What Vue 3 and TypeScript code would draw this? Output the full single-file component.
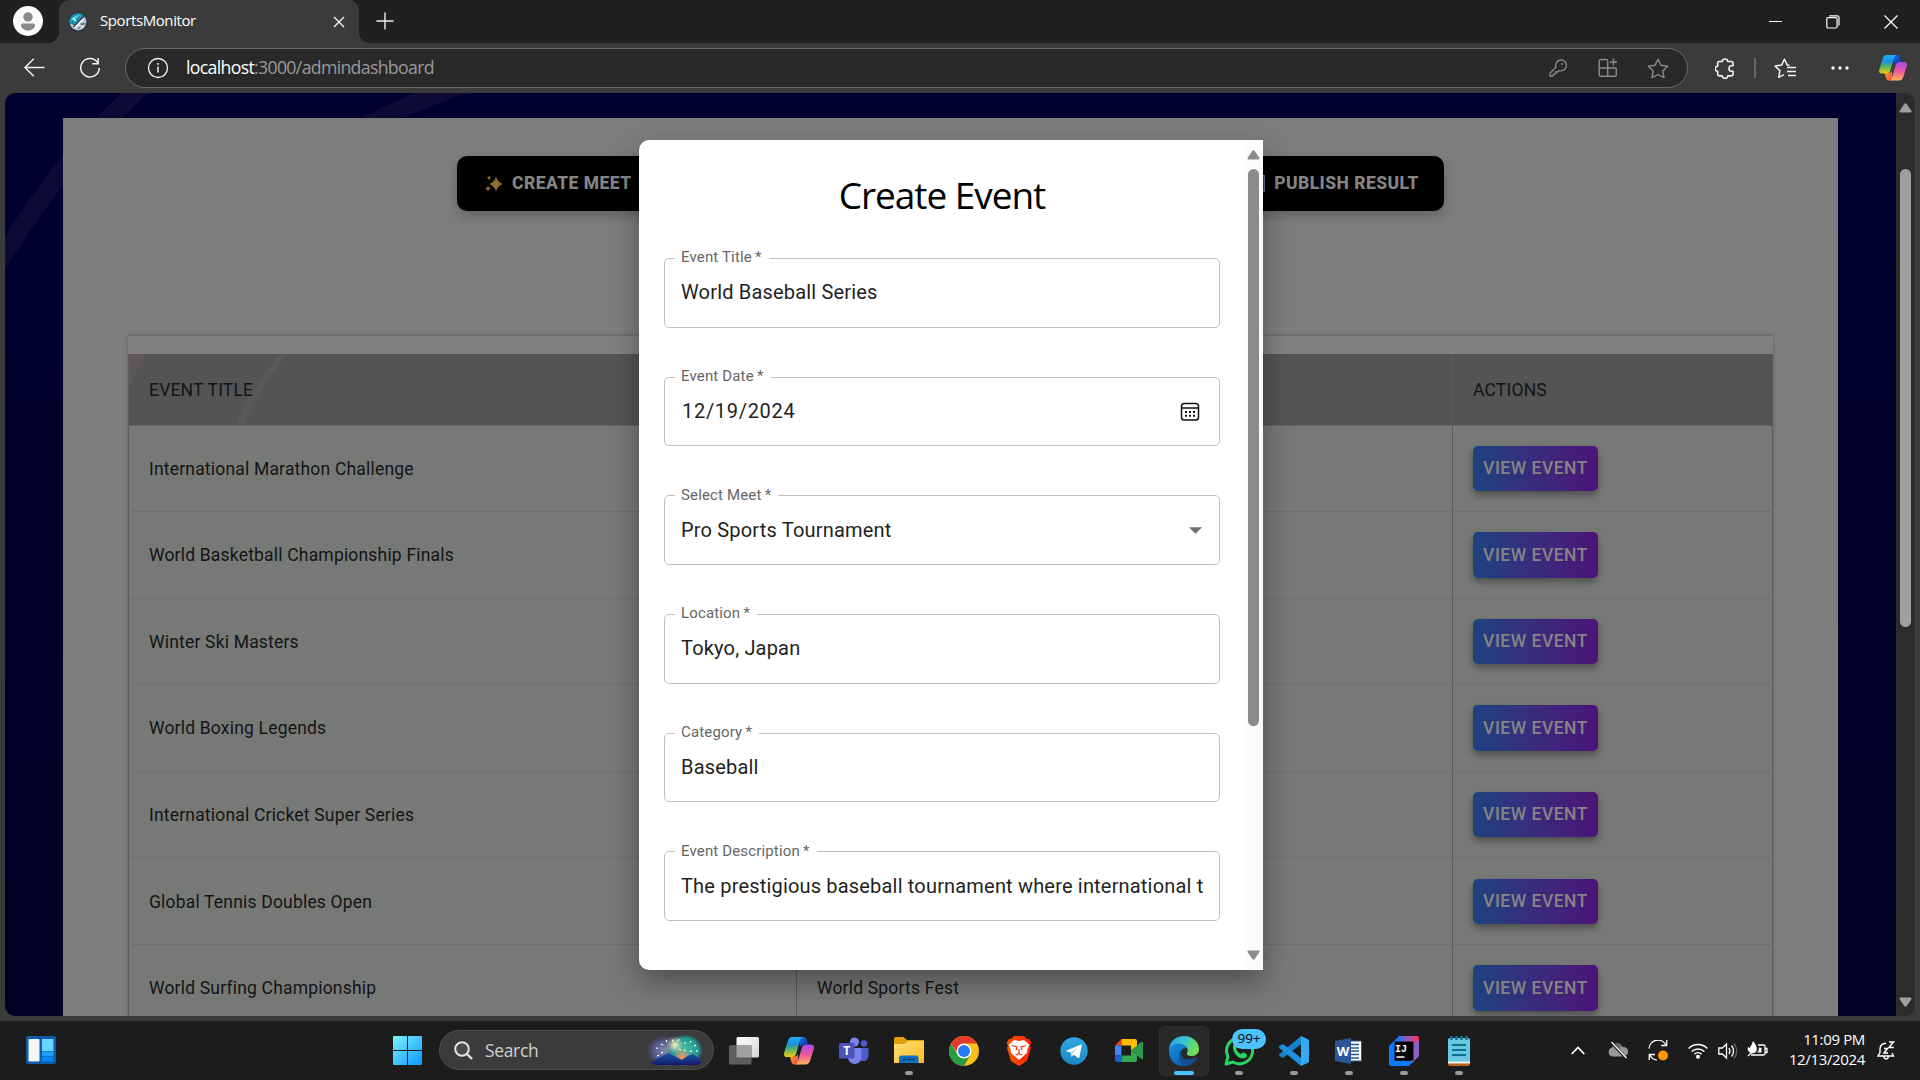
<script setup lang="ts">
interface Field {
  label: string
  value: string
  kind: 'text' | 'date' | 'select'
}
interface EventRow {
  title: string
  meet: string
}

const fields: Field[] = [
  { label: 'Event Title', value: 'World Baseball Series', kind: 'text' },
  { label: 'Event Date', value: '12/19/2024', kind: 'date' },
  { label: 'Select Meet', value: 'Pro Sports Tournament', kind: 'select' },
  { label: 'Location', value: 'Tokyo, Japan', kind: 'text' },
  { label: 'Category', value: 'Baseball', kind: 'text' },
  { label: 'Event Description', value: 'The prestigious baseball tournament where international t', kind: 'text' },
]

const rows: EventRow[] = [
  { title: 'International Marathon Challenge', meet: '' },
  { title: 'World Basketball Championship Finals', meet: '' },
  { title: 'Winter Ski Masters', meet: '' },
  { title: 'World Boxing Legends', meet: '' },
  { title: 'International Cricket Super Series', meet: '' },
  { title: 'Global Tennis Doubles Open', meet: '' },
  { title: 'World Surfing Championship', meet: 'World Sports Fest' },
]
</script>

<template>
  <div class="desktop">
    <svg class="defs" width="0" height="0" aria-hidden="true">
      <defs>
        <linearGradient id="cpA" x1="0" y1="0" x2="0" y2="1">
          <stop offset="0" stop-color="#1fb0f5" /><stop offset=".35" stop-color="#1d8fe0" />
          <stop offset=".65" stop-color="#5fb75a" /><stop offset="1" stop-color="#f8c70e" />
        </linearGradient>
        <linearGradient id="cpB" x1="0" y1="0" x2="0" y2="1">
          <stop offset="0" stop-color="#a24bf0" /><stop offset=".5" stop-color="#f0559a" /><stop offset="1" stop-color="#ffb45c" />
        </linearGradient>
        <linearGradient id="cpC" x1="0" y1="0" x2="1" y2="1">
          <stop offset="0" stop-color="#1b6fe8" /><stop offset="1" stop-color="#0a2fae" />
        </linearGradient>
        <linearGradient id="cpD" x1="0" y1="0" x2="1" y2="1">
          <stop offset="0" stop-color="#f9a13a" /><stop offset="1" stop-color="#f2503a" />
        </linearGradient>
        <symbol id="copilot" viewBox="0 0 30 28">
          <path d="M16 0h3.500c2 0 2.700 1.300 3.200 3l1.300 4.500h-4.500c-2 0-3 1.200-3.500 3z" fill="url(#cpC)" />
          <path d="M14 27.500h-3.500c-2 0-2.700-1.300-3.200-3L6 19.500h4.500c2 0 3-1.200 3.500-3z" fill="url(#cpD)" />
          <path d="M8.500 0h10c-1.300.5-1.900 1.600-2.300 3l-4 13.500c-.6 2-1.700 3.500-4 3.500H3c-2.500 0-3.500-2-2.800-4.500L4 3.500C4.700 1.300 6.200 0 8.500 0z" fill="url(#cpA)" />
          <path d="M21.500 27.500h-10c1.300-.5 1.900-1.600 2.300-3l4-13.500c.6-2 1.700-3.500 4-3.500H27c2.500 0 3.500 2 2.800 4.500L26 24c-.7 2.200-2.200 3.500-4.500 3.500z" fill="url(#cpB)" />
        </symbol>
      </defs>
    </svg>

    <header class="tabs">
      <svg class="avatar" width="30" height="30" viewBox="0 0 30 30">
        <circle cx="15" cy="15" r="15" fill="#fafafa" />
        <circle cx="15" cy="11" r="4.700" fill="#8a8a8a" />
        <path d="M8 19q0-1.500 1.500-1.500h11q1.500 0 1.500 1.500c0 3-3 5.500-7 5.500s-7-2.500-7-5.500z" fill="#8a8a8a" />
      </svg>
      <div class="tab">
        <svg width="20" height="20" viewBox="0 0 20 20">
          <circle cx="10" cy="10" r="9.500" fill="#1c2b38" />
          <circle cx="10" cy="10" r="8.500" fill="#b9c5ce" />
          <path d="M1.500 9A8.500 8.500 0 0 1 15.500 3.500L6.500 13 2 12z" fill="#1698b8" />
          <path d="M3 7.500q4-4.500 9-4.500L6 8z" fill="#6fd6e6" />
          <path d="M16 4L5.500 15" stroke="#1c2b38" stroke-width="1.300" fill="none" />
          <path d="M3 11l5 2.500M9 8l3 1.500M10 17l6-6M12 12h6" stroke="#4a5f6e" stroke-width="1" fill="none" />
          <path d="M5 6l3 3M11 13l4 2M7 15.500L15 7" stroke="#fff" stroke-width="1.200" />
        </svg>
        <span class="tab-title">SportsMonitor</span>
        <svg width="12" height="12" viewBox="0 0 12 12" stroke="#f2f2f2" stroke-width="1.400"><path d="M1 1l10 10M11 1L1 11" /></svg>
      </div>
      <svg class="plus" width="18" height="18" viewBox="0 0 18 18" stroke="#eee" stroke-width="1.400"><path d="M9 .5v17M.5 9h17" /></svg>
      <div class="win">
        <svg width="13" height="13" viewBox="0 0 13 13" stroke="#fff"><path d="M0 6.500h13" /></svg>
        <svg width="14" height="14" viewBox="0 0 14 14" fill="none" stroke="#fff" stroke-width="1.200"><rect x=".8" y="2.700" width="10.300" height="10.300" rx="1.500" /><path d="M3.300.8h8q1.700 0 1.700 1.700v8" /></svg>
        <svg width="14" height="14" viewBox="0 0 14 14" stroke="#fff" stroke-width="1.200"><path d="M.5.500l13 13M13.500.500l-13 13" /></svg>
      </div>
    </header>

    <div class="toolbar">
      <svg class="back" width="21" height="19" viewBox="0 0 21 19" fill="none" stroke="#f2f2f2" stroke-width="1.500"><path d="M9.800.8L1 9.500l8.800 8.700M1 9.500h19.500" /></svg>
      <svg class="reload" width="22" height="22" viewBox="0 0 22 22" fill="none" stroke="#f2f2f2" stroke-width="1.500"><path d="M18.700 5.500A9.300 9.300 0 1 0 20.300 11M19.200 1v5.700h-6" /></svg>
      <div class="address">
        <svg width="22" height="22" viewBox="0 0 22 22" fill="none" stroke="#f2f2f2" stroke-width="1.300"><circle cx="11" cy="11" r="9.500" /><path d="M11 9.500v6M11 6v1.700" stroke-width="1.500" /></svg>
        <span class="url"><b>localhost</b>:3000/admindashboard</span>
        <svg class="key" width="18" height="18" viewBox="0 0 18 18" fill="none" stroke="#8b8b8b" stroke-width="1.300"><path d="M11.300 1a5.400 5.400 0 1 1-1 10.500L8.500 13H6.700v1.800H5L3.700 17H1v-2.800l6-6A5.400 5.400 0 0 1 11.300 1z" /><circle cx="13" cy="5" r=".9" fill="#8b8b8b" stroke="none" /></svg>
        <svg class="apps" width="20" height="20" viewBox="0 0 20 20" fill="none" stroke="#8b8b8b" stroke-width="1.400"><path d="M9.700 18.300V3q0-1.500-1.500-1.500H2.700Q1.200 1.500 1.200 3v13.800q0 1.500 1.500 1.500h14.100q1.500 0 1.500-1.500v-5.300q0-1.500-1.500-1.500H1.200M15.500.5v7M12 4h7" /></svg>
        <svg width="22" height="21" viewBox="0 0 22 21" fill="none" stroke="#8b8b8b" stroke-width="1.400" stroke-linejoin="round"><path d="M11 1.200l3 6.100 6.700 1-4.900 4.700 1.200 6.700-6-3.200-6 3.200 1.200-6.700L1.300 8.300l6.700-1z" /></svg>
      </div>
      <svg class="ext" width="20" height="21" viewBox="0 0 20 21" fill="none" stroke="#f2f2f2" stroke-width="1.600" stroke-linejoin="round"><path d="M4.300 3.500h3a2.700 2.500 0 0 1 5.400 0h3.700q1.600 0 1.600 1.600v2.700h-1.500a2.500 2.700 0 1 0 0 5.400H18v3.100q0 1.600-1.600 1.600h-3.700a2.700 2.500 0 0 1-5.400 0h-3q-1.600 0-1.600-1.600v-3a2.500 2.500 0 0 1 0-5v-3.200q0-1.600 1.600-1.600z" /></svg>
      <i class="sep"></i>
      <svg class="fav" width="22" height="21" viewBox="0 0 22 21" fill="none" stroke="#f2f2f2" stroke-width="1.500" stroke-linejoin="round"><path d="M15.500 7.500l-2.200-.4L10.500 1.200 7.700 7 1.200 8.100l4.700 4.500-1.200 6.700 5.200-2.700M13 9.500h9M13 13.500h9M14 17.500h8" /></svg>
      <svg class="dots" width="18" height="4" viewBox="0 0 18 4" fill="#fff"><circle cx="2" cy="2" r="1.700" /><circle cx="9" cy="2" r="1.700" /><circle cx="16" cy="2" r="1.700" /></svg>
      <svg class="cp" width="28" height="26"><use href="#copilot" /></svg>
    </div>

    <div class="frame">
      <main class="page">
        <svg class="arcs" width="1891" height="923" viewBox="5 93 1891 923" fill="#0d0a36">
          <path d="M122 93Q55 155 5 237v33Q65 170 148 93z" />
          <path d="M415 93Q388 104 362 118h43q30-15 63-25z" />
        </svg>
        <section class="panel">
          <div class="actions">
            <button class="act">
              <svg width="18" height="18" viewBox="0 0 18 18" fill="#90702c"><path d="M11 1.500q1.500 5.500 6.700 7.500-5.200 2-6.700 7.500Q9.500 11 4.500 9q5-2 6.500-7.500zM4 .3q.4 2 2.200 2.500Q4.400 3.300 4 5.300 3.600 3.300 1.800 2.800 3.600 2.300 4 .3zM3 10.500q.4 2.300 2.800 3Q3.400 14.200 3 16.500q-.4-2.300-2.800-3 2.400-.7 2.800-3z" /></svg>
              CREATE MEET
            </button>
            <button class="act right">
              <i class="doc"></i>PUBLISH RESULT
            </button>
          </div>
          <div class="table">
            <div class="row head">
              <svg class="streaks" width="200" height="71" viewBox="0 0 200 71" fill="#5d5858"><path d="M0 0h18Q9 16 0 36zM152 0h8Q132 32 116 71h-8Q124 32 152 0z" /></svg>
              <div class="cell c1">EVENT TITLE</div>
              <div class="cell c2"></div>
              <div class="cell c4">ACTIONS</div>
            </div>
            <div v-for="r in rows" :key="r.title" class="row">
              <div class="cell c1">{{ r.title }}</div>
              <div class="cell c2">{{ r.meet }}</div>
              <div class="cell c4"><button class="view">VIEW EVENT</button></div>
            </div>
          </div>
        </section>
      </main>
      <div class="page-scroll">
        <svg width="13" height="10" viewBox="0 0 13 10"><path d="M5.300 1q1.200-1.600 2.400 0l4.600 6.800q.8 1.700-.9 1.700H1.600Q-.1 9.500.7 7.800z" fill="#a0a0a0" /></svg>
        <i></i>
        <svg class="down" width="13" height="10" viewBox="0 0 13 10"><path d="M5.300 9q1.200 1.600 2.400 0l4.600-6.800q.8-1.700-.9-1.700H1.600Q-.1.500.7 2.200z" fill="#a0a0a0" /></svg>
      </div>
    </div>

    <div class="modal">
      <div class="form">
        <h2>Create Event</h2>
        <div v-for="f in fields" :key="f.label" class="field">
          <label>{{ f.label }}<span>&thinsp;*</span></label>
          <span class="value" :class="f.kind">{{ f.value }}</span>
          <svg v-if="f.kind === 'date'" class="cal" width="20" height="20" viewBox="0 0 20 20" fill="none" stroke="#111" stroke-width="1.500"><rect x="1.500" y="1.500" width="17" height="16.500" rx="2.800" /><path d="M1.500 6h17" /><path d="M5 10h2M9 10h2M13 10h2M5 13.800h2M9 13.800h2M13 13.800h2" stroke-width="2" /></svg>
          <svg v-if="f.kind === 'select'" class="caret" width="13" height="7" viewBox="0 0 13 7"><path d="M0 .3h13L6.500 6.700z" fill="#707070" /></svg>
        </div>
      </div>
      <div class="modal-scroll">
        <svg width="13" height="10" viewBox="0 0 13 10"><path d="M5.300 1q1.200-1.600 2.400 0l4.600 6.800q.8 1.700-.9 1.700H1.600Q-.1 9.500.7 7.800z" fill="#8b8b8b" /></svg>
        <i></i>
        <svg class="down" width="13" height="10" viewBox="0 0 13 10"><path d="M5.300 9q1.200 1.600 2.400 0l4.600-6.800q.8-1.700-.9-1.700H1.600Q-.1.500.7 2.200z" fill="#8b8b8b" /></svg>
      </div>
    </div>

    <footer class="taskbar">
      <svg class="widgets" width="30" height="28" viewBox="0 0 30 28">
        <rect width="30" height="28" rx="2" fill="#0b5cab" />
        <rect x="2.500" y="3" width="11" height="22.500" rx="1" fill="#f6f6f6" />
        <rect x="16" y="3" width="11.500" height="12" fill="#67d6ff" /><rect x="16" y="15.500" width="11.500" height="4.500" fill="#1ea2ff" /><rect x="16" y="20.500" width="11.500" height="5" fill="#0a84ef" />
      </svg>
      <svg class="start" width="29" height="29" viewBox="0 0 29 29">
        <defs><linearGradient id="win" gradientUnits="userSpaceOnUse" x1="0" y1="0" x2="29" y2="29"><stop offset="0" stop-color="#7ff4ff" /><stop offset="1" stop-color="#0a96ff" /></linearGradient></defs>
        <path d="M1 0h13v14H0V1q0-1 1-1zM15 0h13q1 0 1 1v13H15zM0 15h14v14H1q-1 0-1-1zM15 15h14v13q0 1-1 1H15z" fill="url(#win)" />
      </svg>
      <div class="search">
        <svg width="19" height="19" viewBox="0 0 19 19" fill="none" stroke="#e4e4e4" stroke-width="2"><circle cx="8" cy="8" r="6.800" fill="#4a4a4a" /><path d="M13 13l5 5" stroke-width="2.400" /></svg>
        <span>Search</span>
        <svg class="fireworks" width="58" height="32" viewBox="0 0 58 32">
          <defs>
            <radialGradient id="fwA"><stop offset="0" stop-color="#8a88a8" /><stop offset=".6" stop-color="#585c90" /><stop offset="1" stop-color="#4a4c80" stop-opacity="0" /></radialGradient>
            <radialGradient id="fwB"><stop offset="0" stop-color="#45bfa0" /><stop offset=".75" stop-color="#23988f" /><stop offset="1" stop-color="#208080" stop-opacity="0" /></radialGradient>
            <radialGradient id="fwD"><stop offset="0" stop-color="#ff9060" /><stop offset="1" stop-color="#ff9060" stop-opacity="0" /></radialGradient>
            <radialGradient id="fwE"><stop offset="0" stop-color="#fff0c0" /><stop offset="1" stop-color="#d8d0a0" stop-opacity="0" /></radialGradient>
            <linearGradient id="fwC" x1="0" y1="0" x2="0" y2="1"><stop offset="0" stop-color="#1a58a8" /><stop offset="1" stop-color="#15196c" /></linearGradient>
          </defs>
          <ellipse cx="20" cy="17" rx="20" ry="16" fill="url(#fwA)" /><ellipse cx="39" cy="16" rx="18" ry="16" fill="url(#fwB)" />
          <circle cx="29" cy="11" r="9" fill="url(#fwE)" /><circle cx="36" cy="23" r="9" fill="url(#fwD)" />
          <path d="M5 29q8-6 17-10 7 3 14 7 6-5 11-6 5 3 9 8-2 3-7 3H11q-4 0-6-2z" fill="url(#fwC)" />
          <g stroke="#fff" stroke-width="1.200"><path d="M10 14l2 .4M15 10l2 1M20 6l1 2M27 5.500l-.5 2M15 19l2-.6M11 22l2-.7M33 5l-1 2M39 8v2M45 7l-1 1.600M50 11l-2 1M52 17l-2-.2M46 17.500l-2-.3M33 15l2 1M38 17l1-1" /></g>
        </svg>
      </div>
      <div class="apps-row">
        <div class="slot">
          <svg width="30" height="28" viewBox="0 0 30 28"><defs><linearGradient id="tv" x1="0" y1="0" x2="1" y2="1"><stop offset="0" stop-color="#fff" /><stop offset="1" stop-color="#d5d5d5" /></linearGradient></defs><rect x="7.500" width="22.500" height="20.500" rx="1.500" fill="url(#tv)" /><rect y="8" width="22.500" height="19.500" rx="1.500" fill="#5d5d5d" /><path d="M7.500 8h15v12.500h-15z" fill="#a2a2a2" /></svg>
        </div>
        <div class="slot"><svg width="30" height="28"><use href="#copilot" /></svg></div>
        <div class="slot">
          <svg width="30" height="28" viewBox="0 0 30 28"><circle cx="25" cy="6.500" r="3.300" fill="#5059c9" /><path d="M20 11h9.500v7c0 4-2 6-5 6s-5-2-5-6z" fill="#5059c9" /><circle cx="15.500" cy="5" r="4.500" fill="#7b83eb" /><path d="M9 11h13.500v9c0 4-3 7-6.800 7S9 24 9 20z" fill="#7b83eb" /><rect y="6" width="15.500" height="15.500" rx="1.500" fill="#4b53bc" /><text x="7.700" y="18" text-anchor="middle" class="glyph" font-size="12">T</text></svg>
        </div>
        <div class="slot">
          <svg width="30" height="27" viewBox="0 0 30 27"><defs><linearGradient id="fo" x1="0" y1="0" x2="1" y2="1"><stop offset="0" stop-color="#ffe07a" /><stop offset="1" stop-color="#fdbb1c" /></linearGradient></defs><path d="M0 1.500Q0 0 1.500 0h8l3.500 3H30v8H0z" fill="#e19c0a" /><path d="M0 7h10l4-3h16v22H0z" fill="url(#fo)" /><path d="M5 26v-5q0-2.500 2.500-2.500h14.500q2.500 0 2.500 2.500v5z" fill="#0d70c4" /><path d="M9 22.500h12" stroke="#0a3f78" stroke-width="1.500" /></svg>
          <i class="run"></i>
        </div>
        <div class="slot">
          <svg width="30" height="30" viewBox="0 0 30 30"><circle cx="15" cy="15" r="15" fill="#fbc116" /><path d="M2 7.500A15 15 0 0 1 28 7.500H15L9 18z" fill="#e33b2e" /><path d="M2 7.500a15 15 0 0 0 13 22.500l6.500-11.200H8.500z" fill="#2a9a47" /><circle cx="15" cy="15" r="7.500" fill="#fff" /><circle cx="15" cy="15" r="6" fill="#2979f2" /></svg>
        </div>
        <div class="slot">
          <svg width="26" height="30" viewBox="0 0 26 30"><defs><linearGradient id="br"><stop offset="0" stop-color="#ff5500" /><stop offset="1" stop-color="#ff2000" /></linearGradient></defs><path d="M8 0h10l3 3h2l2.500 4L24 10l1 2-4 13-8 5-8-5L1 12l1-2L.5 7 3 3h2z" fill="url(#br)" /><path d="M8 4l5 1 5-1 5.500 5-2 4-.5 4-4 3.500-4 3.500-4-3.500L5 17l-.5-4-2-4z" fill="#fff" /><path d="M6 9.500l5 1.500-.8 3M20 9.500L15 11l.8 3M13 13v4.500M9.500 19l3.500-1.500 3.500 1.500" stroke="#fb3a08" stroke-width="1.300" fill="none" /></svg>
        </div>
        <div class="slot">
          <svg width="28" height="28" viewBox="0 0 28 28"><defs><linearGradient id="tg" x1="0" y1="0" x2="0" y2="1"><stop offset="0" stop-color="#2fa8e0" /><stop offset="1" stop-color="#1b88c4" /></linearGradient></defs><circle cx="14" cy="14" r="13.700" fill="url(#tg)" /><path d="M5.500 14L21 7.500q1-.2.700 1L19.500 20q-.4 1.500-1.700.7l-4-3-2.300 2.200-.8-4.500z" fill="#fff" /><path d="M10.700 15.400l7.500-5-5.500 6-.6 3.500z" fill="#b8d5e8" /></svg>
        </div>
        <div class="slot">
          <svg width="28" height="23" viewBox="0 0 28 23"><path d="M0 6.500L6.500 0v6.500z" fill="#ea4335" /><path d="M0 6.500h6.500v10H0z" fill="#3f83f4" /><path d="M0 16.500h6.500V23H2q-2 0-2-2z" fill="#1b62d0" /><path d="M6.500 0H20q2 0 2 2v5.500l-6 4v-5H6.500z" fill="#fbbc04" /><path d="M6.500 16.500H16v-5l6 4V21q0 2-2 2H6.500z" fill="#34a853" /><path d="M16 11.500L26 3.300q2-1.300 2 .7v15q0 2-2 .7z" fill="#2c9a48" /></svg>
        </div>
        <div class="slot active">
          <svg width="30" height="30" viewBox="0 0 30 30"><defs><linearGradient id="ed" x1="0" y1="0" x2="1" y2=".35"><stop offset="0" stop-color="#2a9fe2" /><stop offset=".5" stop-color="#34c4d8" /><stop offset="1" stop-color="#72dd55" /></linearGradient><linearGradient id="ee" x1="0" y1="0" x2=".6" y2="1"><stop offset="0" stop-color="#1590dc" /><stop offset="1" stop-color="#1160b5" /></linearGradient></defs><path d="M0 14C0 6 6.500 0 15 0s15 6 15 13c0 4-3 7-7 7-3.500 0-6-1-5-3 2-3 0-7-5-7.500C7 9 1 11 0 14z" fill="url(#ed)" /><path d="M0 15c0-4 4-7.500 9-7.500 4.500 0 8.500 2 9.500 5-2-1-5 0-6 2-2 5 2 11 9 13-2 2-5 2.500-7 2.500C6.500 30 0 24 0 15z" fill="url(#ee)" /><path d="M12.500 14c-2 5 1.500 10 7.500 9.500 3 0 5.500-1.500 7.500-2 .5.300.5 1 0 1.500-3 4.500-7 7-13 7C10 28 8 17 12.500 14z" fill="#124f92" /></svg>
          <i class="run"></i>
        </div>
        <div class="slot">
          <svg width="30" height="30" viewBox="0 0 30 30"><path d="M2 28l2-7.300A13 13 0 1 1 9 26z" fill="none" stroke="#25d366" stroke-width="3" stroke-linejoin="round" /><path d="M9 9l2-2 2.500 4-1.500 2q2 4 5 5.200l2-2 4 2.300q0 4-4 4C13.500 22.500 8 16 9 9z" fill="#25d366" /></svg>
          <span class="badge">99+</span><i class="run"></i>
        </div>
        <div class="slot">
          <svg width="30" height="30" viewBox="0 0 30 30"><path d="M22 0l7 3.300q1 .5 1 1.700v20q0 1.200-1 1.700L22 30z" fill="#35a9f2" /><path d="M22 0v8.300L4 22 .5 20q-1-1 0-2z" fill="#1481cc" /><path d="M22 30v-8.300L4 8 .5 10q-1 1 0 2z" fill="#1c8fdd" /></svg>
          <i class="run"></i>
        </div>
        <div class="slot">
          <svg width="28" height="26" viewBox="0 0 28 26"><path d="M15 3h11.500v20H15z" fill="#fff" stroke="#2b5797" /><path d="M15 6.500h9M15 10h9M15 13h9M15 16.500h9M15 20h9" stroke="#2b5797" stroke-width="1.500" /><path d="M0 3l16-3v26L0 23z" fill="#2b579a" /><text x="8" y="18" text-anchor="middle" class="glyph" font-size="13">W</text></svg>
          <i class="run"></i>
        </div>
        <div class="slot">
          <svg width="30" height="30" viewBox="0 0 30 30"><defs><linearGradient id="ij" x1="0" y1="0" x2="1" y2="0"><stop offset="0" stop-color="#2b6df5" /><stop offset=".5" stop-color="#a055b8" /><stop offset="1" stop-color="#ff3158" /></linearGradient></defs><path d="M10 0h18q2 0 2 2v18l-8 6V8L8 6z" fill="url(#ij)" /><path d="M0 10L10 0v7h-4v18h18l-4 5H2q-2 0-2-2z" fill="#0b7cff" /><path d="M24 8l6-4v16l-8 8z" fill="#8d62c4" /><path d="M5.500 5.500h19v19h-19z" fill="#050505" /><path d="M7.500 21h8" stroke="#fff" stroke-width="1.500" /><text x="12" y="15.500" text-anchor="middle" class="glyph mono" font-size="10">IJ</text></svg>
          <i class="run"></i>
        </div>
        <div class="slot">
          <svg width="22" height="30" viewBox="0 0 22 30"><path d="M0 25h22v3q0 2-2 2H2q-2 0-2-2z" fill="#b5651d" /><path d="M0 4q0-2 2-2h18q2 0 2 2v22H0z" fill="#67c8e0" /><path d="M0 25.500h22v2H0z" fill="#f0f0f0" /><path d="M4 9h14M4 14h14M4 19h14" stroke="#0f6d92" stroke-width="1.800" /><path d="M3.500 0v4M8.500 0v4M13.500 0v4M18.500 0v4" stroke="#176f8c" stroke-width="2.500" /></svg>
          <i class="run"></i>
        </div>
      </div>
      <div class="tray">
        <svg width="14" height="9" viewBox="0 0 14 9" fill="none" stroke="#fff" stroke-width="1.700"><path d="M.7 8L7 1.500 13.300 8" /></svg>
        <svg class="cloud" width="20" height="17" viewBox="0 0 20 17"><path d="M4.500 14.500a4.500 4.500 0 0 1-.5-8.800A5.500 5.500 0 0 1 14.500 5 4.800 4.800 0 0 1 16 14.500z" fill="#9a9a9a" /><path d="M7 2a5.500 5.500 0 0 1 7.500 3q-4 0-5 4z" fill="#6c6c6c" /><path d="M3 0l15 16" stroke="#1c1c1c" stroke-width="3" /><path d="M3.500 0l15 16" stroke="#fff" stroke-width="1.300" /></svg>
        <svg class="sync" width="20" height="21" viewBox="0 0 20 21" fill="none" stroke="#fff" stroke-width="1.300"><path d="M1 8.500A9 9 0 0 1 18 5M18.700 0v5.500h-5.500M1.300 20v-5.500H7M1.800 15q2.500 4.500 7 5" /><circle cx="15" cy="15.500" r="5" fill="#ff9800" stroke="none" /></svg>
        <svg class="wifi" width="20" height="16" viewBox="0 0 20 16" fill="none" stroke="#fff" stroke-width="1.500"><path d="M.7 5.500a13 13 0 0 1 18.600 0M3.700 8.500a9 9 0 0 1 12.600 0M6.500 11.200a5 5 0 0 1 7 0" /><circle cx="10" cy="13.700" r="2" fill="#fff" stroke="none" /></svg>
        <svg class="vol" width="20" height="18" viewBox="0 0 20 18" fill="none" stroke="#fff" stroke-width="1.300"><path d="M.8 6h3.500L8.500 2v14L4.300 12H.8zM11 6q1.800 3 0 6M13.500 3.500q4 5.500 0 11" /><path d="M16 1.500q5.500 7.500 0 15" stroke="#666" /></svg>
        <svg class="bat" width="21" height="17" viewBox="0 0 21 17" fill="none" stroke="#fff" stroke-width="1.300"><path d="M11 4h5.500Q18 4 18 5.500v7q0 1.500-1.500 1.500H4M18.500 7.500H20v4h-1.500" /><path d="M6 0q5 6 3.500 10Q8 13 4 12-.5 10 1 6l1.500 1Q5 4 6 0z" fill="#fff" stroke="none" /><path d="M12 6.500q2 0 2.500.5v4.500H10q2-1.500 2-5z" fill="#fff" stroke="none" /><path d="M1 15l4-4" /></svg>
        <div class="clock"><span>11:09 PM</span><span>12/13/2024</span></div>
        <svg class="bell" width="18" height="19" viewBox="0 0 18 19" fill="none" stroke="#fff" stroke-width="1.400"><path d="M9 2.300Q3.200 2.500 3 8v3.500L1 15h15.500L15 12M6.500 15.500q1 2.500 2.700 2.500t2.500-2.500" /><path d="M12 1h4.500L12 6.500h4.700M7 7.500h3.500L7 12h4" stroke-width="1.500" /></svg>
      </div>
    </footer>
  </div>
</template>

<style>
body {
  background: #1c1c1c;
  overflow: hidden;
}
</style>

<style scoped>
.desktop {
  position: relative;
  width: 1920px;
  height: 1080px;
  display: flex;
  flex-direction: column;
  overflow: hidden;
  background: #3b3b3b;
  font-family: 'Open Sans', 'Noto Sans', sans-serif;
  box-sizing: border-box;
}
.desktop *, .desktop *::before, .desktop *::after { box-sizing: border-box; }
svg { flex: none; display: block; }
.defs { position: absolute; }
.tabs {
  flex: none;
  height: 43px;
  display: flex;
  background: #202020;
}
.avatar { margin: 6px 16px 0 13px; }
.tab {
  position: relative;
  width: 300px;
  height: 43px;
  display: flex;
  align-items: center;
  padding: 0 14px 0 9px;
  background: #3b3b3b;
  border-radius: 10px 10px 0 0;
}
.tab::before, .tab::after {
  content: '';
  position: absolute;
  bottom: 0;
  width: 10px;
  height: 10px;
}
.tab::before { left: -10px; background: radial-gradient(circle at 0 0, transparent 9.5px, #3b3b3b 10px); }
.tab::after { right: -10px; background: radial-gradient(circle at 100% 0, transparent 9.5px, #3b3b3b 10px); }
.tab-title {
  flex: 1;
  margin-left: 12px;
  margin-top: -3px;
  font-size: 15px;
  letter-spacing: -0.4px;
  color: #fff;
}
.plus { margin: 12px 0 0 17px; }
.win {
  margin-left: auto;
  display: flex;
  align-items: center;
  gap: 44px;
  padding-right: 22px;
}
.toolbar {
  flex: none;
  height: 50px;
  display: flex;
  align-items: center;
}
.back { margin: -1px 0 0 24px; }
.reload { margin: 0 0 0 34px; }
.address {
  width: 1563px;
  height: 40px;
  margin-left: 24px;
  display: flex;
  align-items: center;
  padding: 0 18px 0 21px;
  background: #292929;
  border: 1px solid #696969;
  border-radius: 20px;
}
.url {
  margin-left: 17px;
  margin-top: -3px;
  font-size: 17.7px;
  letter-spacing: -0.67px;
  color: #9a9a9a;
}
.url b { font-weight: 400; color: #fff; }
.key { margin-left: auto; }
.apps { margin: 0 29px 0 31px; }
.ext { margin-left: 26.5px; }
.sep { width: 2px; height: 20px; margin: 0 18px 0 19px; background: #666; }
.dots { margin: 0 0 0 35px; }
.cp { margin-left: 30px; }
.frame {
  flex: none;
  width: 1910px;
  height: 923px;
  margin-left: 5px;
  display: flex;
  border-radius: 10px;
  overflow: hidden;
}
.page {
  position: relative;
  width: 1891px;
  height: 923px;
  padding: 25px 58px 0;
  background: linear-gradient(#000030, #000022);
  overflow: hidden;
}
.arcs { position: absolute; left: 0; top: 0; }
.panel {
  position: relative;
  height: 900px;
  padding: 38px 65px 0;
  background: #7d7d7d;
}
.actions { display: flex; justify-content: space-between; padding: 0 329px; }
.act {
  width: 250px;
  height: 55px;
  display: flex;
  align-items: center;
  padding: 0 0 0 28px;
  border: 0;
  border-radius: 10px;
  background: #000;
  color: #858585;
  font: 800 17.5px/1 Roboto, sans-serif;
  letter-spacing: 0.45px;
  box-shadow: 0 5px 12px rgba(0, 0, 0, 0.2);
  white-space: nowrap;
}
.act svg { margin-right: 9px; }
.act.right { justify-content: flex-end; padding: 0 25px 0 0; }
.doc { width: 18px; height: 17px; margin-right: 9px; background: #17486d; border: 1px solid #607585; }
.table {
  margin-top: 123px;
  padding-top: 18px;
  background: #808080;
  border-top: 2px solid #6f6f6f;
  box-shadow: 0 2px 3px rgba(0, 0, 0, 0.25);
}
.row {
  height: 86.6px;
  display: flex;
  background: #777977;
  border-bottom: 1px solid #6d6f6e;
}
.head {
  position: relative;
  height: 71.5px;
  background: #545454;
  border-bottom: 1px solid #636363;
}
.streaks { position: absolute; left: 0; top: 0; }
.cell {
  position: relative;
  display: flex;
  align-items: center;
  padding: 2px 0 0 20px;
  border-left: 1px solid #595a5a;
  color: #141414;
  font: 400 17.5px/1 Roboto, sans-serif;
  letter-spacing: 0.19px;
}
.head .cell { border-left-color: #5f5f5f; }
.c1 { width: 668px; }
.c2 { width: 656px; }
.c4 { flex: 1; border-right: 1px solid #5c5c5c; padding-top: 0; }
.head .c4 { padding-top: 2px; }
.view {
  width: 125px;
  height: 45.4px;
  border: 0;
  border-radius: 5px;
  padding: 1px 0 0;
  background: linear-gradient(90deg, #1d437f, #3b2b7d 50%, #4b1577);
  color: #858585;
  font: 500 17.5px/1 Roboto, sans-serif;
  letter-spacing: 0.5px;
  white-space: nowrap;
  box-shadow: 0 4px 7px rgba(0, 0, 0, 0.35);
}
.page-scroll {
  width: 19px;
  background: #2c2c2c;
  display: flex;
  flex-direction: column;
  align-items: center;
  padding: 10px 0 9px;
}
.page-scroll i { width: 11px; height: 458px; margin-top: 56px; border-radius: 6px; background: #9f9f9f; }
.down { margin-top: auto; }
.modal {
  position: absolute;
  left: 639px;
  top: 140px;
  width: 624px;
  height: 830px;
  display: flex;
  background: #fff;
  border-radius: 10px 0 0 10px;
  overflow: hidden;
  box-shadow: 0 12px 28px rgba(0, 0, 0, 0.35);
}
.form {
  width: 606px;
  padding: 25px 25px 0;
}
h2 {
  height: 60px;
  margin: 0 0 33px;
  text-align: center;
  font-size: 37px;
  line-height: 60px;
  font-weight: 400;
  letter-spacing: -1.05px;
  color: #000;
}
.field {
  position: relative;
  height: 69.6px;
  margin-bottom: 49.1px;
  display: flex;
  align-items: center;
  justify-content: space-between;
  padding: 0 17px 1px 16px;
  border: 1px solid #c1c1c1;
  border-radius: 5px;
  font-family: Roboto, sans-serif;
}
label {
  position: absolute;
  left: 10px;
  top: -10.6px;
  padding: 0 7px 0 6px;
  background: #fff;
  font-size: 15px;
  line-height: 18px;
  letter-spacing: 0.15px;
  color: #666;
}
.value {
  font-size: 20px;
  letter-spacing: 0.18px;
  color: #1f1f1f;
  white-space: nowrap;
}
.value.date { letter-spacing: 0.7px; padding-left: 1px; }
.cal { margin: 2px 2px 0 0; }
.caret { margin-top: 2px; }
.modal-scroll {
  width: 18px;
  background: #fcfcfc;
  display: flex;
  flex-direction: column;
  align-items: center;
  padding: 10px 1px 10px 0;
}
.modal-scroll i { width: 11px; height: 557px; margin-top: 8.5px; border-radius: 6px; background: #8b8b8b; }
.taskbar {
  flex: none;
  height: 59px;
  margin-top: 5px;
  display: flex;
  align-items: center;
  background: #1c1c1c;
}
.widgets { margin: -2px 0 0 26px; }
.start { margin: 0 0 0 337px; }
.search {
  width: 275px;
  height: 40px;
  margin-left: 17px;
  margin-top: -1px;
  display: flex;
  align-items: center;
  padding-left: 14px;
  background: #3b3b3b;
  border: 1px solid #4d4d4d;
  border-radius: 20px;
}
.search span { margin-left: 12px; margin-top: -1px; font-size: 17.5px; letter-spacing: -0.35px; color: #d0d0d0; }
.fireworks { margin: 0 9px 0 auto; }
.apps-row { display: flex; margin-left: 5px; }
.slot {
  position: relative;
  width: 50px;
  height: 50px;
  margin-right: 5px;
  display: flex;
  align-items: center;
  justify-content: center;
  border-radius: 5px;
}
.active { background: #292929; border: 1px solid #303030; }
.run {
  position: absolute;
  left: 21px;
  bottom: 1px;
  width: 8px;
  height: 4px;
  border-radius: 2px;
  background: #999;
}
.active .run { left: 14px; bottom: 0; width: 20px; background: #4cc2ff; }
.badge {
  position: absolute;
  left: 18px;
  top: 3px;
  width: 34px;
  height: 20px;
  border-radius: 10px;
  background: #4cc2ff;
  color: #000;
  font-size: 13.5px;
  line-height: 19px;
  text-align: center;
}
.glyph { fill: #fff; font-family: 'Open Sans', sans-serif; font-weight: 700; }
.mono { font-family: 'Liberation Mono', monospace; }
.tray { display: flex; align-items: center; margin-left: auto; padding-right: 25px; }
.cloud { margin-left: 23px; }
.sync { margin-left: 20px; }
.wifi { margin-left: 20px; }
.vol { margin-left: 10px; }
.bat { margin: -2px 0 0 9px; }
.clock {
  width: 97px;
  margin-top: -4px;
  display: flex;
  flex-direction: column;
  align-items: flex-end;
  font-size: 15px;
  line-height: 20px;
  letter-spacing: -0.35px;
  color: #fff;
}
.bell { margin-left: 12px; }
</style>
